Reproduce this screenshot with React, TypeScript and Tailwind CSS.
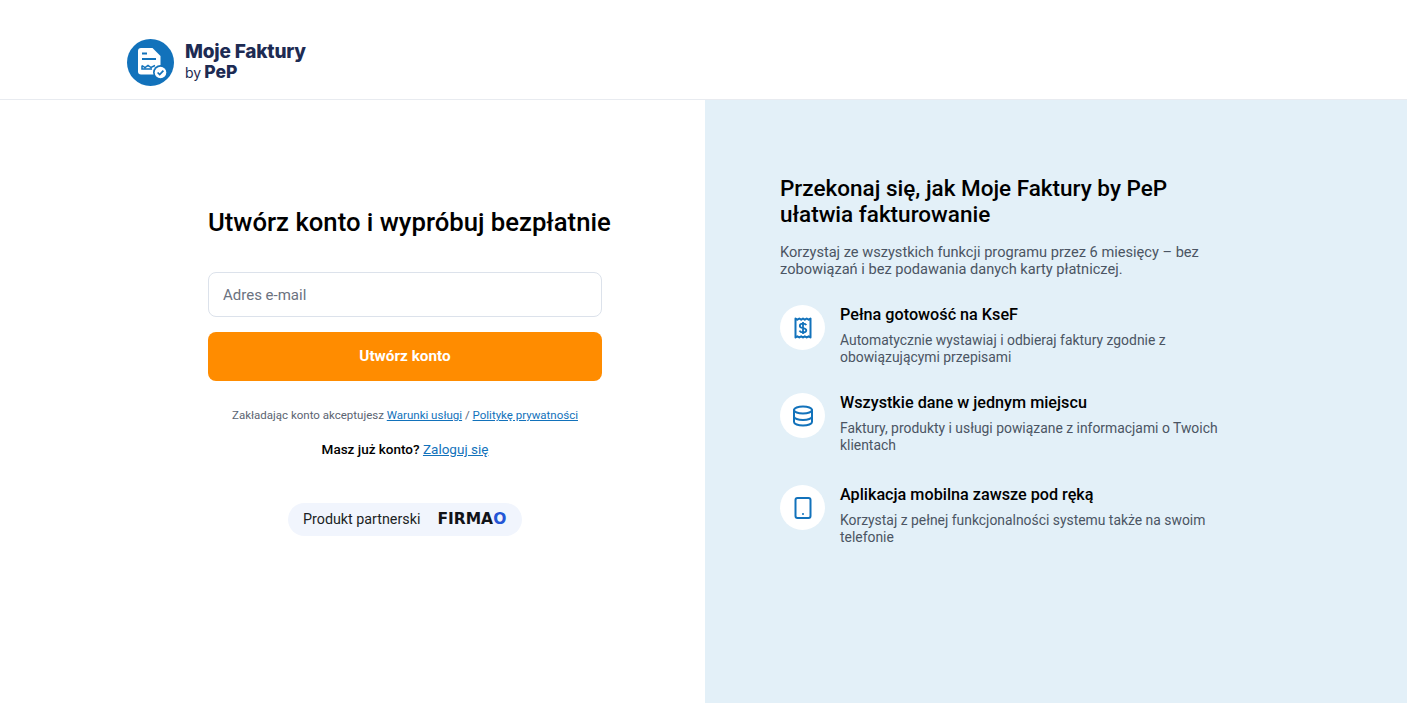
import React from "react";

function Logo() {
  return (
    <svg viewBox="0 0 47 47" className="h-[47px] w-[47px]">
      <circle cx="23.500" cy="23.500" r="23.500" fill="#1272bb" />
      <path d="M14 9h11.500l8 8v15.500a3 3 0 0 1-3 3H14a3 3 0 0 1-3-3V12a3 3 0 0 1 3-3z" fill="#fff" />
      <path d="M15 14.500h5M15 20h14" stroke="#1272bb" strokeWidth="2" fill="none" />
      <path d="M15 26.500v3.500h10M15 26.500l3 2 3-2 3 2 4-2" stroke="#1272bb" strokeWidth="1.500" fill="none" />
      <circle cx="33.500" cy="33.500" r="7.500" fill="#1272bb" />
      <circle cx="33.500" cy="33.500" r="5.800" fill="#fff" />
      <path d="M30.600 33.500l2.100 2.100 3.700-3.900" stroke="#1272bb" strokeWidth="1.700" fill="none" />
    </svg>
  );
}

function ReceiptIcon() {
  return (
    <svg viewBox="0 0 24 24" className="h-6 w-6" fill="none" stroke="#1272bb" strokeWidth="2">
      <path d="M4.500 2.500l1.900 1.200 1.900-1.200 1.900 1.200L12 2.500l1.800 1.200 1.900-1.200 1.900 1.200 1.900-1.200v19l-1.900-1.200-1.900 1.200-1.900-1.200L12 21.500l-1.800-1.200-1.900 1.200-1.900-1.200-1.900 1.200z" strokeLinejoin="round" />
      <path d="M15.300 9.200c-.5-1-1.700-1.500-3.300-1.500-1.800 0-3.200.8-3.200 2.200 0 3.100 6.500 1.300 6.500 4.300 0 1.400-1.400 2.200-3.300 2.200-1.700 0-3-.6-3.500-1.700M12 6v12" strokeWidth="1.800" />
    </svg>
  );
}

function DatabaseIcon() {
  return (
    <svg viewBox="0 0 24 24" className="h-6 w-6" fill="none" stroke="#1272bb" strokeWidth="2" strokeLinecap="round">
      <ellipse cx="12" cy="6" rx="9" ry="3.500" />
      <path d="M3 6v12c0 1.900 4 3.500 9 3.500s9-1.600 9-3.500V6" />
      <path d="M3 12.500c0 1.900 4 3.500 9 3.500s9-1.600 9-3.500" />
    </svg>
  );
}

function TabletIcon() {
  return (
    <svg viewBox="0 0 24 24" className="h-6 w-6" fill="none" stroke="#1272bb" strokeWidth="2" strokeLinecap="round">
      <rect x="4.500" y="2" width="15" height="20" rx="2" />
      <path d="M12 18h.01" strokeWidth="2" />
    </svg>
  );
}

const features = [
  {
    icon: <ReceiptIcon />,
    title: "Pełna gotowość na KseF",
    text: "Automatycznie wystawiaj i odbieraj faktury zgodnie z obowiązującymi przepisami",
    height: "h-[64px]",
  },
  {
    icon: <DatabaseIcon />,
    title: "Wszystkie dane w jednym miejscu",
    text: "Faktury, produkty i usługi powiązane z informacjami o Twoich klientach",
    height: "h-[68px]",
  },
  {
    icon: <TabletIcon />,
    title: "Aplikacja mobilna zawsze pod ręką",
    text: "Korzystaj z pełnej funkcjonalności systemu także na swoim telefonie",
    height: "h-[68px]",
  },
];

export default function App() {
  return (
    <div className="flex h-[703px] flex-col overflow-hidden bg-white font-['Roboto',sans-serif] text-[#0b0f14]">
      <header className="flex h-[100px] shrink-0 items-start gap-[11px] border-b border-[#e8ebf0] pt-[39px] pl-[127px]">
        <Logo />
        <div className="mt-[3px] font-['Inter',sans-serif] text-[#1d2b53]">
          <div className="text-[19px] leading-[20px] font-extrabold tracking-[-0.2px]">Moje Faktury</div>
          <div className="mt-[1px] flex items-baseline gap-[3px] leading-[17px]">
            <span className="text-[14px] font-normal">by</span>
            <span className="text-[17.500px] font-extrabold">PeP</span>
          </div>
        </div>
      </header>

      <main className="flex flex-1">
        <section className="w-[705px] pt-[106px] pl-[208px]">
          <div className="w-[394px]">
            <h1 className="text-[25.700px] leading-[32px] font-medium whitespace-nowrap text-black">
              Utwórz konto i wypróbuj bezpłatnie
            </h1>
            <div className="mt-[34px] flex h-[45px] items-center rounded-lg border border-[#dce2eb] bg-white px-[14px] pt-[1px] text-[15px] text-[#6b7280]">
              Adres e-mail
            </div>
            <button
              type="button"
              className="mt-[15px] block h-[49px] w-full rounded-lg bg-[#ff8c00] text-[15.300px] font-bold text-white"
            >
              Utwórz konto
            </button>
            <p className="mt-[26px] text-center text-[11.500px] leading-[16px] text-[#5b6472]">
              Zakładając konto akceptujesz{" "}
              <a className="text-[#1272bb] underline">Warunki usługi</a> /{" "}
              <a className="text-[#1272bb] underline">Politykę prywatności</a>
            </p>
            <p className="mt-[17px] text-center text-[13.500px] leading-[18px] font-medium text-black">
              Masz już konto? <a className="font-normal text-[#1272bb] underline">Zaloguj się</a>
            </p>
            <div className="mt-[45px] flex justify-center">
              <div className="flex h-[33px] w-[234px] items-center gap-[17px] rounded-full bg-[#f1f5fd] pl-[15px]">
                <span className="text-[14.300px] text-[#1b1f24]">Produkt partnerski</span>
                <span className="font-['DejaVu_Sans',sans-serif] text-[15.500px] leading-none font-bold text-[#111318]">
                  FIRMA<span className="text-[#2456d6]">O</span>
                </span>
              </div>
            </div>
          </div>
        </section>

        <section className="flex-1 bg-[#e3f0f8] pt-[75px] pl-[75px]">
          <h2 className="w-[440px] text-[22.500px] leading-[26px] font-medium text-black">
            Przekonaj się, jak Moje Faktury by PeP ułatwia fakturowanie
          </h2>
          <p className="mt-[17px] w-[440px] text-[14.600px] leading-[17px] text-[#4b5563]">
            Korzystaj ze wszystkich funkcji programu przez 6 miesięcy – bez zobowiązań i bez podawania danych karty płatniczej.
          </p>
          <ul className="mt-[27px] flex flex-col gap-[24px]">
            {features.map((f) => (
              <li key={f.title} className={`flex gap-[15px] ${f.height}`}>
                <div className="flex h-[45px] w-[45px] shrink-0 items-center justify-center rounded-full bg-white">
                  {f.icon}
                </div>
                <div className="w-[385px]">
                  <h3 className="text-[16.200px] leading-[20px] font-medium text-black">{f.title}</h3>
                  <p className="mt-[7px] text-[13.900px] leading-[17px] text-[#4b5563]">{f.text}</p>
                </div>
              </li>
            ))}
          </ul>
        </section>
      </main>
    </div>
  );
}
